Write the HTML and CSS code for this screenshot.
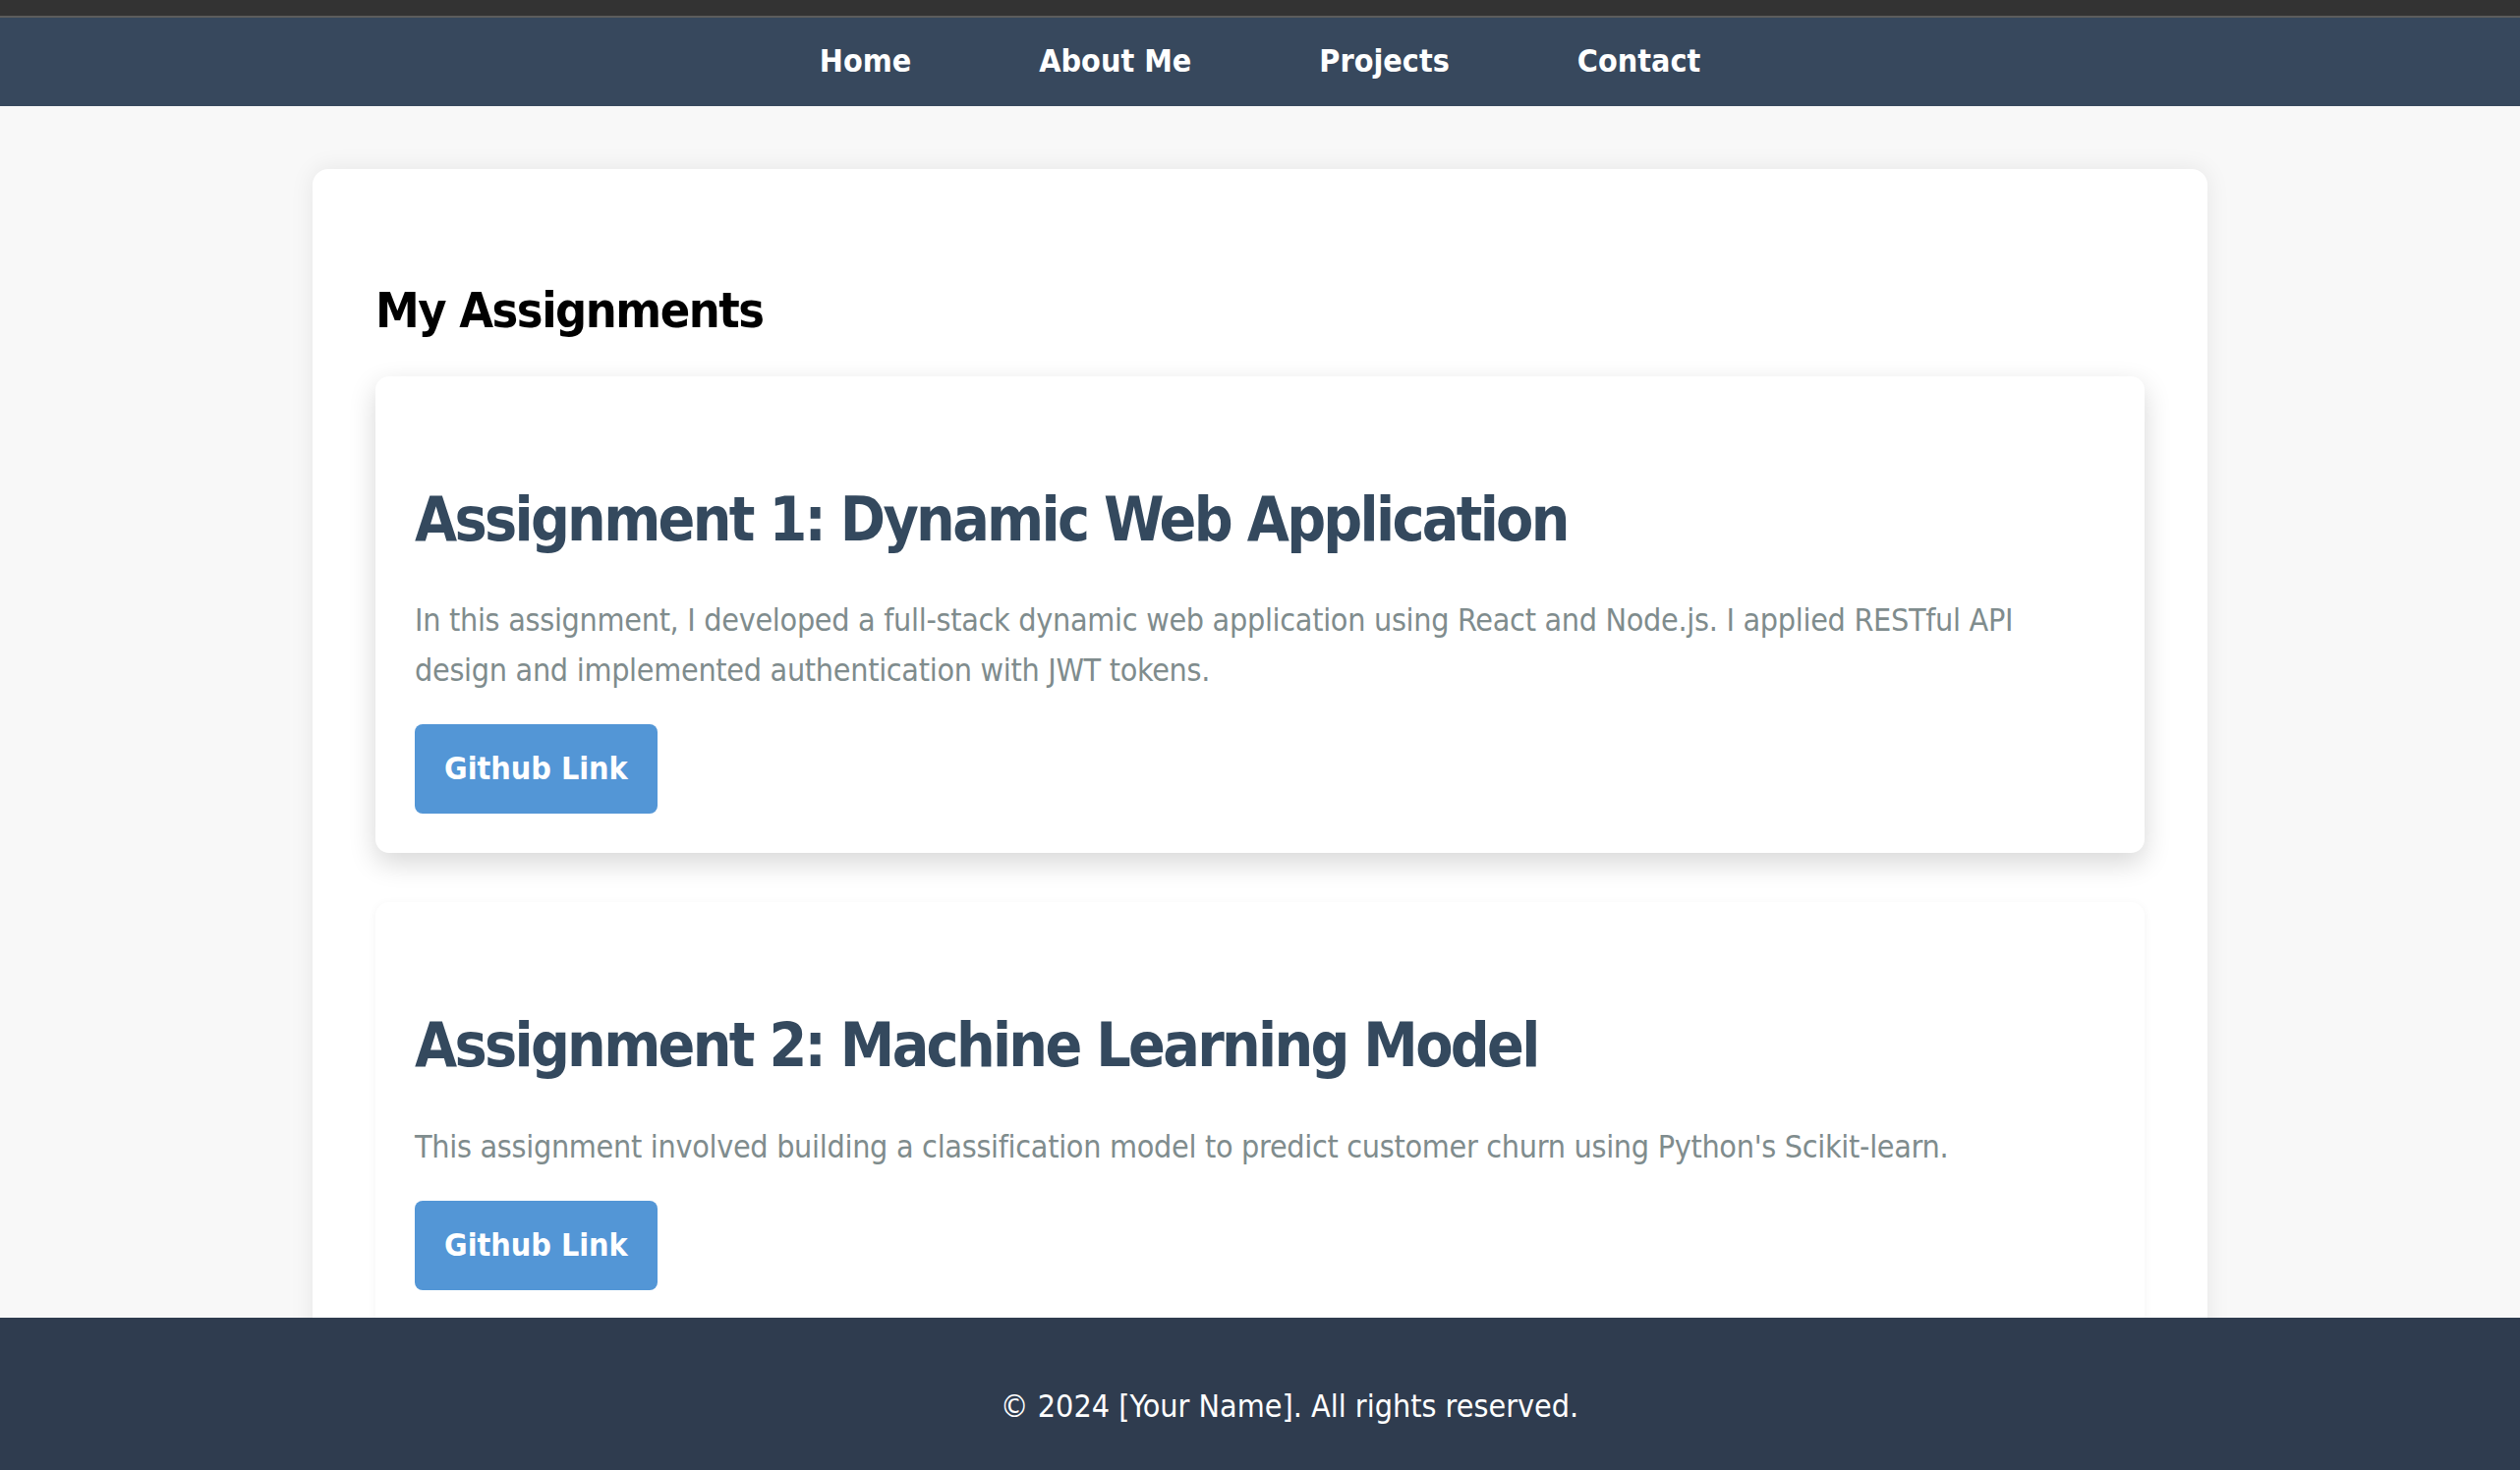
FILE: index.html
```html
<!DOCTYPE html>
<html lang="en">
<head>
<meta charset="utf-8">
<title>My Assignments</title>
<link rel="stylesheet" href="styles.css">
</head>
<body>
<div class="topbar"></div>
<nav class="nav">
  <a class="nav-link" href="#">Home</a>
  <a class="nav-link" href="#">About Me</a>
  <a class="nav-link" href="#">Projects</a>
  <a class="nav-link" href="#">Contact</a>
</nav>
<main class="page">
  <section class="panel">
    <h2 class="panel-title">My Assignments</h2>
    <article class="card card-raised">
      <h3 class="card-title">Assignment 1: Dynamic Web Application</h3>
      <p class="card-text">In this assignment, I developed a full-stack dynamic web application using React and Node.js. I applied RESTful API design and implemented authentication with JWT tokens.</p>
      <a class="btn" href="#">Github Link</a>
    </article>
    <article class="card">
      <h3 class="card-title">Assignment 2: Machine Learning Model</h3>
      <p class="card-text">This assignment involved building a classification model to predict customer churn using Python's Scikit-learn.</p>
      <a class="btn" href="#">Github Link</a>
    </article>
  </section>
</main>
<footer class="footer">
  <p class="footer-text">© 2024 [Your Name]. All rights reserved.</p>
</footer>
</body>
</html>
```
FILE: styles.css
```css
* { box-sizing: border-box; }
html, body { margin: 0; padding: 0; }
body {
  background: #f8f8f8;
  font-family: "DejaVu Sans Condensed", "DejaVu Sans", sans-serif;
  font-stretch: condensed;
  overflow: hidden;
  height: 1496px;
}
.topbar {
  height: 18px;
  background: #333333;
  border-bottom: 2px solid #5c5c5c;
}
.nav {
  height: 90px;
  background: #37485d;
  display: flex;
  justify-content: center;
  align-items: center;
  gap: 130px;
  padding-bottom: 2px;
}
.nav-link {
  color: #ffffff;
  text-decoration: none;
  font-weight: bold;
  font-size: 32px;
  line-height: 1.2;
}
.page {
  padding-top: 64px;
}
.panel {
  width: 1928px;
  margin: 0 auto;
  background: #ffffff;
  border-radius: 16px;
  padding: 64px;
  box-shadow: 0 0 24px rgba(0, 0, 0, 0.08);
}
.panel-title {
  margin: 50px 0 37px;
  font-size: 50px;
  line-height: 1.2;
  font-weight: bold;
  letter-spacing: -1.5px;
  color: #000000;
}
.card {
  background: #ffffff;
  border-radius: 14px;
  padding: 40px;
  margin-bottom: 50px;
  box-shadow: 0 2px 10px rgba(0, 0, 0, 0.05);
}
.card-raised {
  box-shadow: 0 10px 28px rgba(0, 0, 0, 0.16);
}
.card-title {
  margin: 69px 0 40px;
  font-size: 62px;
  line-height: 1.2;
  font-weight: bold;
  letter-spacing: -2.7px;
  color: #34495e;
}
.card-text {
  margin: 0 0 29px;
  font-size: 32px;
  line-height: 51px;
  letter-spacing: -0.3px;
  color: #7f8c8d;
}
.btn {
  display: inline-block;
  height: 91px;
  line-height: 91px;
  padding: 0 30px;
  background: #5396d6;
  color: #ffffff;
  border-radius: 8px;
  font-size: 32px;
  font-weight: bold;
  text-decoration: none;
}
.footer {
  position: fixed;
  left: 0;
  right: 0;
  bottom: 0;
  height: 155px;
  background: #2f3c4f;
  padding-top: 65px;
  padding-left: 60px;
}
.footer-text {
  margin: 0;
  text-align: center;
  color: #ffffff;
  font-size: 32px;
  line-height: 51px;
}
```
